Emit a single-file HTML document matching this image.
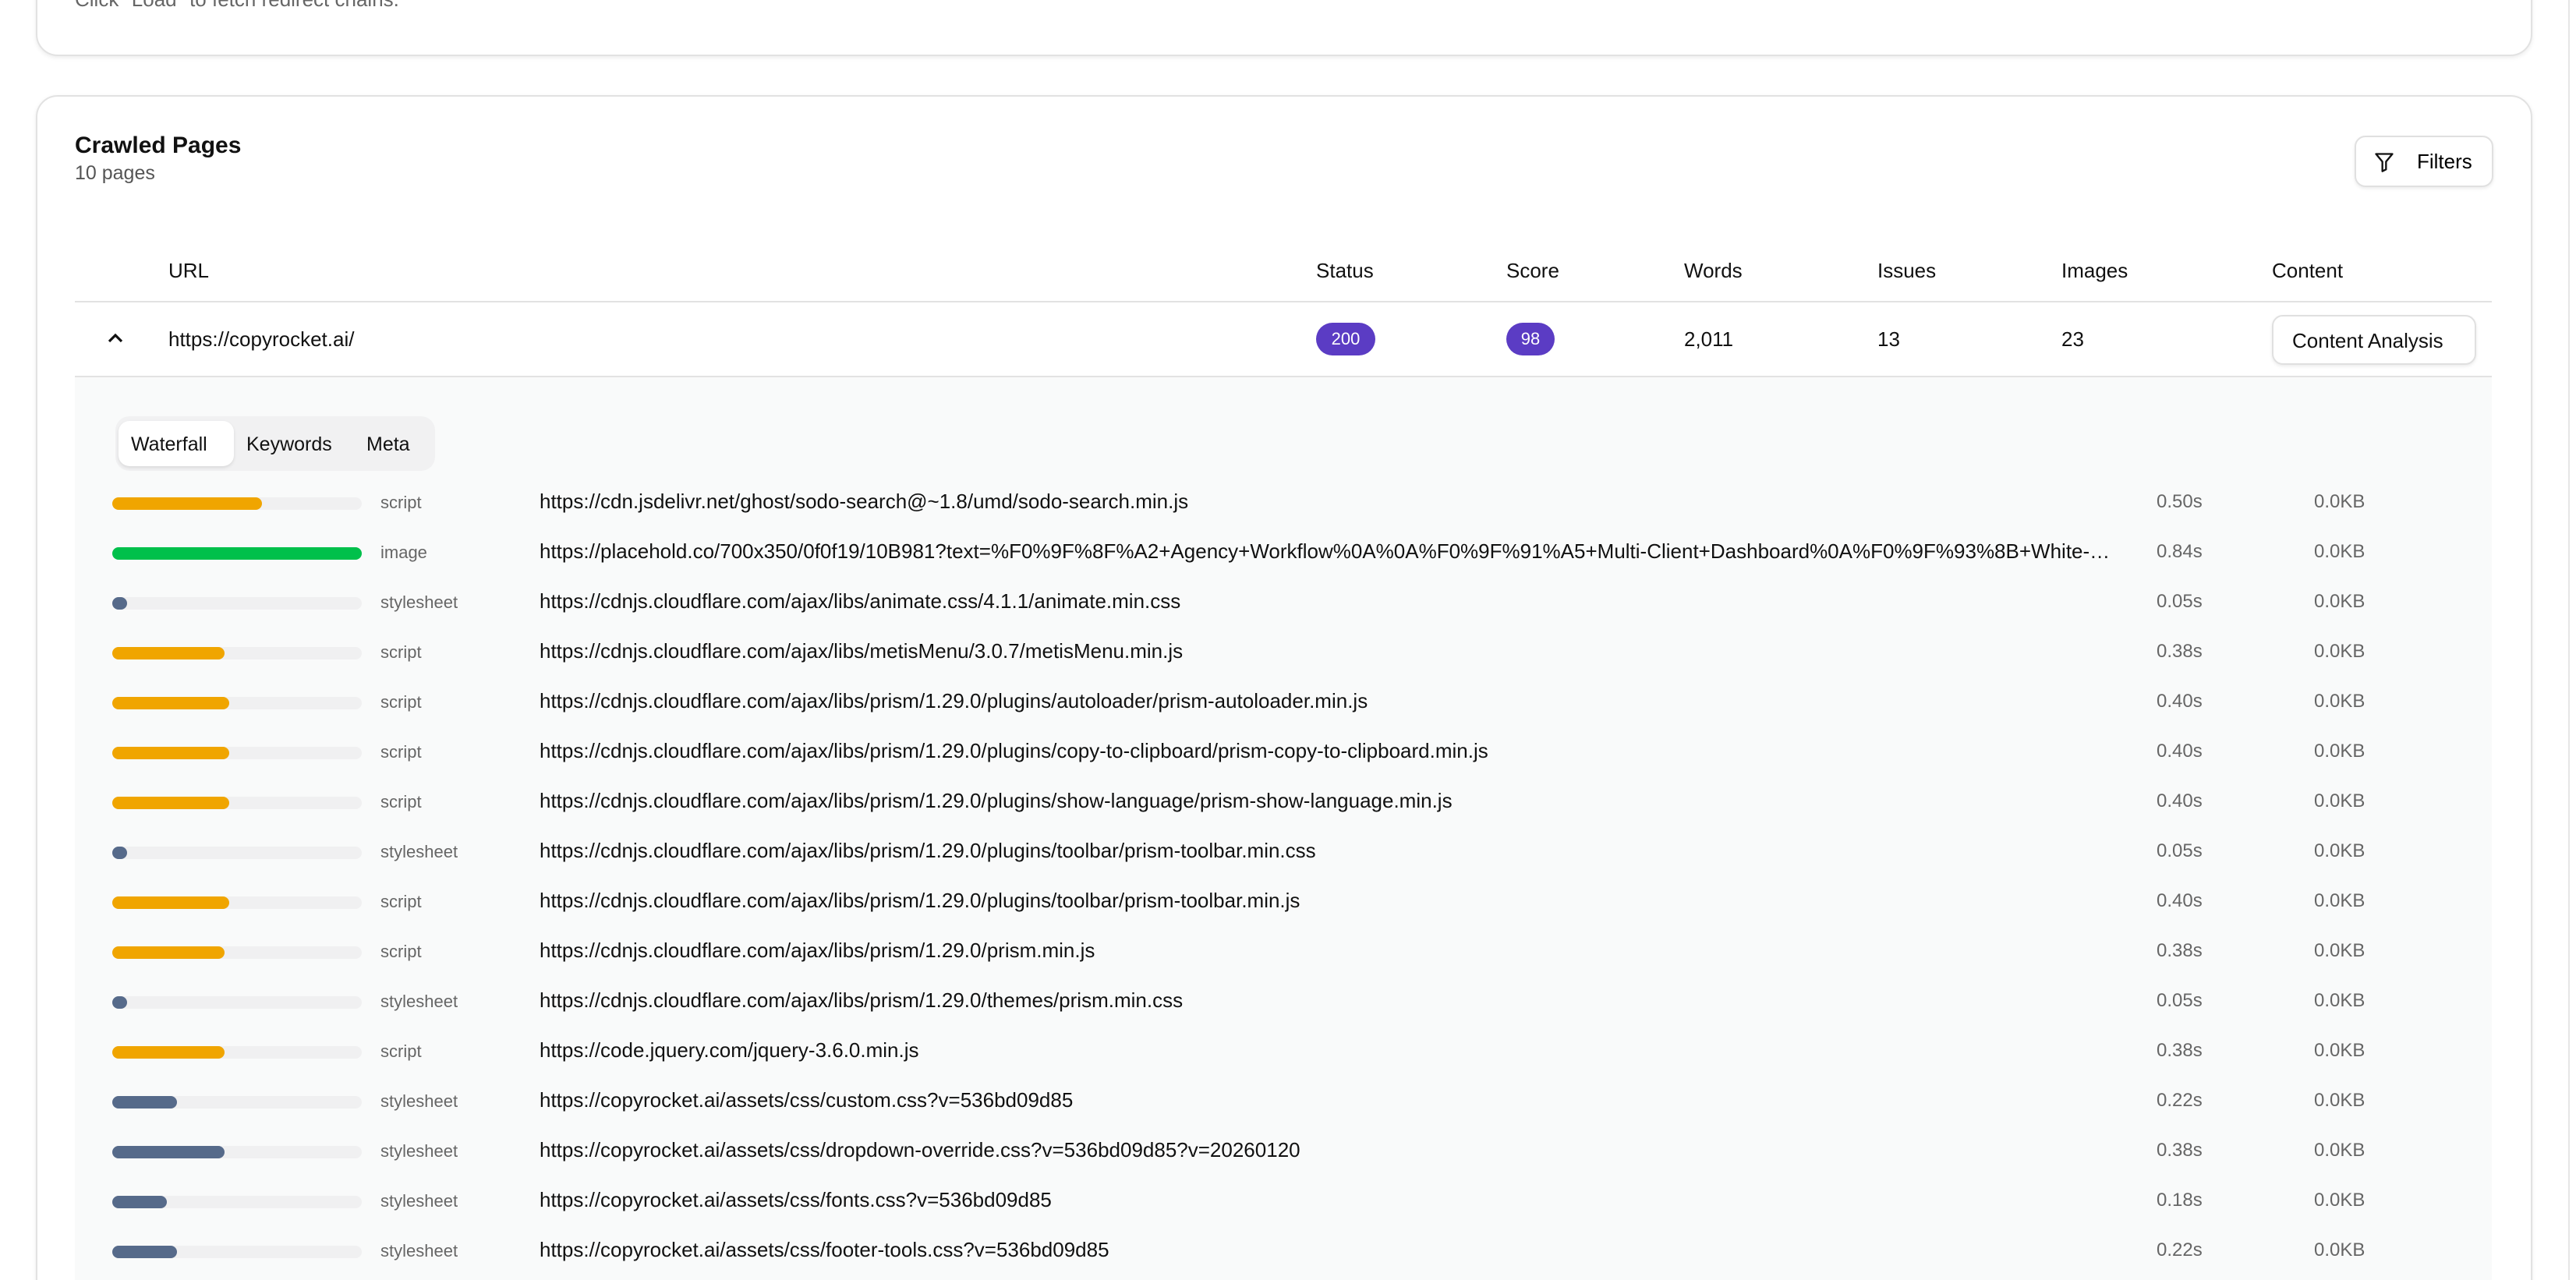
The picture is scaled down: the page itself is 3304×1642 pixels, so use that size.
<!DOCTYPE html>
<html><head><meta charset="utf-8"><style>
html,body{margin:0;padding:0;background:#fff;overflow:hidden}
body{width:3304px;height:1642px}
#w{zoom:2;width:1652px;height:821px;position:relative;font-family:"Liberation Sans",sans-serif;color:#111;overflow:hidden}
.a{position:absolute}
.card{position:absolute;border:1px solid #e2e2e2;border-radius:14px;background:#fff;box-shadow:0 1px 3px rgba(0,0,0,.08)}
.h{font-size:13px;color:#111;top:166px}
.row{position:absolute;left:72px;width:1520px;height:32px}
.tr{position:absolute;left:0;top:12px;width:160px;height:8px;border-radius:4px;background:#f0f0f1}
.fl{position:absolute;left:0;top:0;height:8px;border-radius:4px}
.ty{position:absolute;left:172px;top:9px;font-size:11px;color:#666}
.u{position:absolute;left:274px;top:7px;font-size:13px;color:#111;white-space:nowrap;max-width:1010px;overflow:hidden;text-overflow:ellipsis}
.t{position:absolute;left:1311px;top:8px;font-size:12px;color:#666}
.k{position:absolute;left:1412px;top:8px;font-size:12px;color:#666}
.badge{position:absolute;top:207px;height:21px;border-radius:11px;background:#5b3cc4;color:#fff;font-size:11px;line-height:21px;text-align:center}
.btn{position:absolute;border:1px solid #e0e0e0;border-radius:7px;background:#fff;box-shadow:0 1px 2px rgba(0,0,0,.08);font-size:13px}
</style></head><body><div id="w">
<div class="card" style="left:23px;top:-20px;width:1599px;height:54px"></div>
<div class="a" style="left:48px;top:-8px;font-size:13px;color:#666">Click "Load" to fetch redirect chains.</div>
<div class="card" style="left:23px;top:61px;width:1599px;height:800px"></div>
<div class="a" style="left:1647px;top:0;width:1px;height:821px;background:#e6e6e6"></div>
<div class="a" style="left:48px;top:85px;font-size:15px;font-weight:bold">Crawled Pages</div>
<div class="a" style="left:48px;top:104px;font-size:12.5px;color:#555">10 pages</div>
<div class="btn" style="left:1510px;top:87px;width:87px;height:31px">
<svg class="a" style="left:11px;top:9px" width="14" height="14" viewBox="0 0 24 24" fill="none" stroke="#111" stroke-width="2" stroke-linejoin="round"><path d="M3 3h18l-7 8.5V20l-4 2v-10.5z"/></svg>
<span class="a" style="left:39px;top:8px;font-size:13px;color:#000">Filters</span></div>
<div class="a h" style="left:108px">URL</div>
<div class="a h" style="left:844px">Status</div>
<div class="a h" style="left:966px">Score</div>
<div class="a h" style="left:1080px">Words</div>
<div class="a h" style="left:1204px">Issues</div>
<div class="a h" style="left:1322px">Images</div>
<div class="a h" style="left:1457px">Content</div>
<div class="a" style="left:48px;top:193px;width:1550px;height:1px;background:#e2e2e2"></div>
<svg class="a" style="left:68px;top:212px" width="12" height="10" viewBox="0 0 12 10" fill="none" stroke="#111" stroke-width="1.6"><path d="M2 7l4-4 4 4"/></svg>
<div class="a" style="left:108px;top:210px;font-size:13px">https://copyrocket.ai/</div>
<div class="badge" style="left:844px;width:38px">200</div>
<div class="badge" style="left:966px;width:31px">98</div>
<div class="a" style="left:1080px;top:210px;font-size:13px">2,011</div>
<div class="a" style="left:1204px;top:210px;font-size:13px">13</div>
<div class="a" style="left:1322px;top:210px;font-size:13px">23</div>
<div class="btn" style="left:1457px;top:202px;width:129px;height:30px"><span class="a" style="left:12px;top:8px">Content Analysis</span></div>
<div class="a" style="left:48px;top:241px;width:1550px;height:1px;background:#e2e2e2"></div>
<div class="a" style="left:48px;top:242px;width:1550px;height:600px;background:#f9fafa"></div>
<div class="a" style="left:74px;top:267px;width:205px;height:35px;border-radius:9px;background:#f1f1f2"></div>
<div class="a" style="left:76px;top:270px;width:74px;height:29px;border-radius:7px;background:#fff;box-shadow:0 1px 2px rgba(0,0,0,.1)"></div>
<div class="a" style="left:84px;top:278px;font-size:12.5px">Waterfall</div>
<div class="a" style="left:158px;top:278px;font-size:12.5px">Keywords</div>
<div class="a" style="left:235px;top:278px;font-size:12.5px">Meta</div>

<div class="row" style="top:307px"><div class="tr"><div class="fl" style="width:60%;background:#f0a500"></div></div><div class="ty">script</div><div class="u">https://cdn.jsdelivr.net/ghost/sodo-search@~1.8/umd/sodo-search.min.js</div><div class="t">0.50s</div><div class="k">0.0KB</div></div>
<div class="row" style="top:339px"><div class="tr"><div class="fl" style="width:100%;background:#00c04b"></div></div><div class="ty">image</div><div class="u">https://placehold.co/700x350/0f0f19/10B981?text=%F0%9F%8F%A2+Agency+Workflow%0A%0A%F0%9F%91%A5+Multi-Client+Dashboard%0A%F0%9F%93%8B+White-Label</div><div class="t">0.84s</div><div class="k">0.0KB</div></div>
<div class="row" style="top:371px"><div class="tr"><div class="fl" style="width:6%;background:#566a8a"></div></div><div class="ty">stylesheet</div><div class="u">https://cdnjs.cloudflare.com/ajax/libs/animate.css/4.1.1/animate.min.css</div><div class="t">0.05s</div><div class="k">0.0KB</div></div>
<div class="row" style="top:403px"><div class="tr"><div class="fl" style="width:45%;background:#f0a500"></div></div><div class="ty">script</div><div class="u">https://cdnjs.cloudflare.com/ajax/libs/metisMenu/3.0.7/metisMenu.min.js</div><div class="t">0.38s</div><div class="k">0.0KB</div></div>
<div class="row" style="top:435px"><div class="tr"><div class="fl" style="width:47%;background:#f0a500"></div></div><div class="ty">script</div><div class="u">https://cdnjs.cloudflare.com/ajax/libs/prism/1.29.0/plugins/autoloader/prism-autoloader.min.js</div><div class="t">0.40s</div><div class="k">0.0KB</div></div>
<div class="row" style="top:467px"><div class="tr"><div class="fl" style="width:47%;background:#f0a500"></div></div><div class="ty">script</div><div class="u">https://cdnjs.cloudflare.com/ajax/libs/prism/1.29.0/plugins/copy-to-clipboard/prism-copy-to-clipboard.min.js</div><div class="t">0.40s</div><div class="k">0.0KB</div></div>
<div class="row" style="top:499px"><div class="tr"><div class="fl" style="width:47%;background:#f0a500"></div></div><div class="ty">script</div><div class="u">https://cdnjs.cloudflare.com/ajax/libs/prism/1.29.0/plugins/show-language/prism-show-language.min.js</div><div class="t">0.40s</div><div class="k">0.0KB</div></div>
<div class="row" style="top:531px"><div class="tr"><div class="fl" style="width:6%;background:#566a8a"></div></div><div class="ty">stylesheet</div><div class="u">https://cdnjs.cloudflare.com/ajax/libs/prism/1.29.0/plugins/toolbar/prism-toolbar.min.css</div><div class="t">0.05s</div><div class="k">0.0KB</div></div>
<div class="row" style="top:563px"><div class="tr"><div class="fl" style="width:47%;background:#f0a500"></div></div><div class="ty">script</div><div class="u">https://cdnjs.cloudflare.com/ajax/libs/prism/1.29.0/plugins/toolbar/prism-toolbar.min.js</div><div class="t">0.40s</div><div class="k">0.0KB</div></div>
<div class="row" style="top:595px"><div class="tr"><div class="fl" style="width:45%;background:#f0a500"></div></div><div class="ty">script</div><div class="u">https://cdnjs.cloudflare.com/ajax/libs/prism/1.29.0/prism.min.js</div><div class="t">0.38s</div><div class="k">0.0KB</div></div>
<div class="row" style="top:627px"><div class="tr"><div class="fl" style="width:6%;background:#566a8a"></div></div><div class="ty">stylesheet</div><div class="u">https://cdnjs.cloudflare.com/ajax/libs/prism/1.29.0/themes/prism.min.css</div><div class="t">0.05s</div><div class="k">0.0KB</div></div>
<div class="row" style="top:659px"><div class="tr"><div class="fl" style="width:45%;background:#f0a500"></div></div><div class="ty">script</div><div class="u">https://code.jquery.com/jquery-3.6.0.min.js</div><div class="t">0.38s</div><div class="k">0.0KB</div></div>
<div class="row" style="top:691px"><div class="tr"><div class="fl" style="width:26%;background:#566a8a"></div></div><div class="ty">stylesheet</div><div class="u">https://copyrocket.ai/assets/css/custom.css?v=536bd09d85</div><div class="t">0.22s</div><div class="k">0.0KB</div></div>
<div class="row" style="top:723px"><div class="tr"><div class="fl" style="width:45%;background:#566a8a"></div></div><div class="ty">stylesheet</div><div class="u">https://copyrocket.ai/assets/css/dropdown-override.css?v=536bd09d85?v=20260120</div><div class="t">0.38s</div><div class="k">0.0KB</div></div>
<div class="row" style="top:755px"><div class="tr"><div class="fl" style="width:22%;background:#566a8a"></div></div><div class="ty">stylesheet</div><div class="u">https://copyrocket.ai/assets/css/fonts.css?v=536bd09d85</div><div class="t">0.18s</div><div class="k">0.0KB</div></div>
<div class="row" style="top:787px"><div class="tr"><div class="fl" style="width:26%;background:#566a8a"></div></div><div class="ty">stylesheet</div><div class="u">https://copyrocket.ai/assets/css/footer-tools.css?v=536bd09d85</div><div class="t">0.22s</div><div class="k">0.0KB</div></div>
</div></body></html>
